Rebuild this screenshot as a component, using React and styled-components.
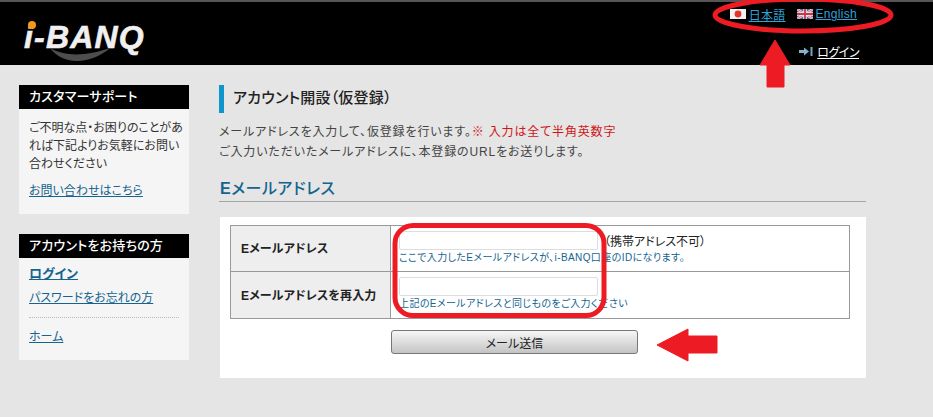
import React from "react";
import styled, { createGlobalStyle } from "styled-components";

const Global = createGlobalStyle`
  html, body {
    margin: 0;
    padding: 0;
    background: #e5e5e5;
    overflow: hidden;
  }
  * { box-sizing: border-box; }
`;

const Page = styled.div`
  position: relative;
  width: 933px;
  height: 417px;
  overflow: hidden;
  background: #e5e5e5;
  color: #333;
  font-family: "Liberation Sans", "Noto Sans CJK JP", sans-serif;
  font-size: 12px;
  font-feature-settings: "palt";
`;

const Header = styled.header`
  height: 65px;
  background: #000;
  border-top: 2px solid #555;
  display: flex;
  justify-content: space-between;
  padding: 0 76px 0 24px;
`;

const Logo = styled.div`
  position: relative;
  width: 122px;
  padding-top: 17px;
`;

const LogoText = styled.span`
  display: block;
  font-family: "Liberation Sans", sans-serif;
  font-weight: 700;
  font-style: italic;
  font-size: 32px;
  line-height: 36px;
  letter-spacing: 1.2px;
  color: #f0f0f0;
  -webkit-text-stroke: 0.6px #f0f0f0;
  white-space: nowrap;
`;

const LogoDot = styled.i`
  position: absolute;
  left: 4px;
  top: 19px;
  width: 8px;
  height: 8px;
  border-radius: 50%;
  background: #f59a17;
`;

const LogoSwoosh = styled.svg`
  position: absolute;
  left: 26px;
  top: 45px;
`;

const HeaderRight = styled.div`
  display: flex;
  flex-direction: column;
  align-items: flex-end;
  padding-top: 5px;
`;

const LangRow = styled.div`
  display: flex;
  align-items: center;
  gap: 11px;
  height: 14px;
`;

const Lang = styled.span`
  display: flex;
  align-items: center;
  gap: 3px;
`;

const LangLink = styled.a`
  color: #2fa3d8;
  text-decoration: underline;
  font-size: 12px;
  letter-spacing: 0.3px;
`;

const LoginRow = styled.div`
  display: flex;
  align-items: center;
  gap: 4px;
  margin-top: 22px;
  margin-right: -2px;
  height: 16px;
`;

const LoginLink = styled.a`
  color: #fff;
  text-decoration: underline;
  font-size: 12px;
  letter-spacing: -0.5px;
`;

const Body = styled.div`
  display: flex;
  align-items: flex-start;
  gap: 30px;
  padding: 20px 67px 0 19px;
`;

const Sidebar = styled.aside`
  width: 170px;
  display: flex;
  flex-direction: column;
  gap: 20px;
  flex-shrink: 0;
`;

const SideBox = styled.section`
  background: #f5f5f5;
  height: ${(p) => p.$height}px;
`;

const SideTitle = styled.h3`
  margin: 0;
  height: 24px;
  padding-left: 10px;
  background: #000;
  color: #fff;
  font-size: 13px;
  font-weight: 500;
  line-height: 23px;
  letter-spacing: 0.2px;
`;

const SideBody = styled.div`
  padding: ${(p) => p.$top}px 10px 0;
  line-height: 18px;
  color: #333;
  white-space: nowrap;
`;

const SideLink = styled.a`
  display: block;
  color: #14648f;
  text-decoration: underline;
  font-weight: ${(p) => (p.$bold ? 700 : 400)};
  font-size: ${(p) => (p.$bold ? 13 : 12)}px;
  margin-top: ${(p) => p.$top || 0}px;
  line-height: 18px;
`;

const Dots = styled.hr`
  border: 0;
  border-top: 1px dotted #bbb;
  margin: 10px 0 0;
`;

const Main = styled.main`
  flex: 1;
  min-width: 0;
`;

const PageTitle = styled.h1`
  margin: 0;
  height: 28px;
  border-left: 5px solid #0e95cb;
  padding-left: 9px;
  font-size: 15px;
  font-weight: 500;
  line-height: 26px;
  letter-spacing: 0.2px;
  color: #222;
`;

const Intro = styled.p`
  margin: 9px 0 0;
  font-size: 12px;
  line-height: 20px;
  letter-spacing: 0.85px;
  color: #444;
`;

const Note = styled.span`
  color: #d01515;
`;

const SectionTitle = styled.h2`
  margin: 16px 0 0;
  height: 24px;
  padding-left: 1px;
  border-bottom: 1px solid #a5a5a5;
  font-size: 16px;
  font-weight: 500;
  line-height: 22px;
  letter-spacing: 0.5px;
  color: #14648f;
`;

const SectionInitial = styled.b`
  font-weight: 700;
`;

const Panel = styled.div`
  margin: 15px 0 0 1px;
  height: 161px;
  background: #fff;
  padding: 8px 16px 0 10px;
`;

const Table = styled.div`
  border: 1px solid #999;
  display: grid;
  grid-template-columns: 160px 1fr;
  grid-auto-rows: 46px;
`;

const LabelCell = styled.div`
  background: #eee;
  border-right: 1px solid #999;
  border-bottom: ${(p) => (p.$last ? 0 : "1px solid #999")};
  display: flex;
  align-items: center;
  padding: 0 0 2px 10px;
  font-size: 12px;
  font-weight: 700;
  letter-spacing: 0.15px;
  color: #222;
`;

const FieldCell = styled.div`
  border-bottom: ${(p) => (p.$last ? 0 : "1px solid #999")};
  padding: 5px 0 0 8px;
`;

const FieldRow = styled.div`
  display: flex;
  align-items: center;
  gap: 6px;
  height: 19px;
  color: #222;
  font-size: 12px;
`;

const Input = styled.input`
  width: 199px;
  height: 19px;
  border: 1px solid #ddd;
  border-radius: 2px;
  background: #fff;
  padding: 0;
  outline: 0;
`;

const Hint = styled.div`
  font-size: 10px;
  line-height: 16px;
  letter-spacing: 0.4px;
  color: #14648f;
  white-space: nowrap;
`;

const SendButton = styled.button`
  display: block;
  width: 247px;
  height: 24px;
  margin: 11px 0 0 161px;
  border: 1px solid #777;
  border-radius: 3px;
  background: linear-gradient(#f6f6f6, #c4c4c4);
  color: #222;
  font-family: inherit;
  font-feature-settings: inherit;
  font-size: 12px;
  padding: 0;
`;

const Marks = styled.svg`
  position: absolute;
  left: 0;
  top: 0;
  pointer-events: none;
`;

const JapanFlag = () => (
  <svg width="16" height="10" viewBox="0 0 16 10">
    <rect width="16" height="10" fill="#f2f2f2" />
    <circle cx="8" cy="5" r="3.4" fill="#e0342c" />
  </svg>
);

const UkFlag = () => (
  <svg width="16" height="10" viewBox="0 0 16 10">
    <rect width="16" height="10" fill="#5a5f96" />
    <path d="M0 0L16 10M16 0L0 10" stroke="#e8dede" strokeWidth="2.4" />
    <path d="M0 0L16 10M16 0L0 10" stroke="#c85a6a" strokeWidth="0.8" />
    <path d="M8 0V10M0 5H16" stroke="#eee" strokeWidth="3.4" />
    <path d="M8 0V10M0 5H16" stroke="#c9354a" strokeWidth="1.8" />
  </svg>
);

const LoginArrow = () => (
  <svg width="14" height="9" viewBox="0 0 14 9">
    <path d="M0 3H5V0.5L10 4.5L5 8.5V6H0Z" fill="#7fb4cc" />
    <rect x="11.5" y="0" width="2" height="9" fill="#6fa8c4" />
  </svg>
);

function App() {
  return (
    <Page>
      <Global />
      <Header>
        <Logo>
          <LogoText>i-BANQ</LogoText>
          <LogoDot />
          <LogoSwoosh width="60" height="18" viewBox="0 0 60 18">
            <path d="M0 1C14 9 34 10 60 1C46 14 16 22 0 1Z" fill="#4d4d4d" />
          </LogoSwoosh>
        </Logo>
        <HeaderRight>
          <LangRow>
            <Lang>
              <JapanFlag />
              <LangLink>日本語</LangLink>
            </Lang>
            <Lang>
              <UkFlag />
              <LangLink>English</LangLink>
            </Lang>
          </LangRow>
          <LoginRow>
            <LoginArrow />
            <LoginLink>ログイン</LoginLink>
          </LoginRow>
        </HeaderRight>
      </Header>
      <Body>
        <Sidebar>
          <SideBox $height={129}>
            <SideTitle>カスタマーサポート</SideTitle>
            <SideBody $top={10}>
              ご不明な点・お困りのことがあ
              <br />
              れば下記よりお気軽にお問い
              <br />
              合わせください
              <SideLink $top={9}>お問い合わせはこちら</SideLink>
            </SideBody>
          </SideBox>
          <SideBox $height={126}>
            <SideTitle>アカウントをお持ちの方</SideTitle>
            <SideBody $top={7}>
              <SideLink $bold>ログイン</SideLink>
              <SideLink $top={6}>パスワードをお忘れの方</SideLink>
              <Dots />
              <SideLink $top={10}>ホーム</SideLink>
            </SideBody>
          </SideBox>
        </Sidebar>
        <Main>
          <PageTitle>アカウント開設（仮登録）</PageTitle>
          <Intro>
            メールアドレスを入力して、仮登録を行います。<Note>※ 入力は全て半角英数字</Note>
            <br />
            ご入力いただいたメールアドレスに、本登録のURLをお送りします。
          </Intro>
          <SectionTitle>
            <SectionInitial>E</SectionInitial>メールアドレス
          </SectionTitle>
          <Panel>
            <Table>
              <LabelCell>Eメールアドレス</LabelCell>
              <FieldCell>
                <FieldRow>
                  <Input />
                  <span>（携帯アドレス不可）</span>
                </FieldRow>
                <Hint>ここで入力したEメールアドレスが、i-BANQ口座のIDになります。</Hint>
              </FieldCell>
              <LabelCell $last>Eメールアドレスを再入力</LabelCell>
              <FieldCell $last>
                <FieldRow>
                  <Input />
                </FieldRow>
                <Hint>上記のEメールアドレスと同じものをご入力ください</Hint>
              </FieldCell>
            </Table>
            <SendButton>メール送信</SendButton>
          </Panel>
        </Main>
      </Body>
      <Marks width="933" height="417" viewBox="0 0 933 417">
        <ellipse cx="803" cy="15" rx="88" ry="16" fill="none" stroke="#ed1c24" strokeWidth="5" />
        <path d="M775 40L790 65H784V87H767V65H760Z" fill="#ed1c24" stroke="#ed1c24" strokeLinejoin="round" />
        <rect x="395" y="225.5" width="209" height="90" rx="18" fill="none" stroke="#ed1c24" strokeWidth="5" />
        <path d="M657 345L688 329V336H717V353H688V361Z" fill="#ed1c24" stroke="#ed1c24" strokeLinejoin="round" />
      </Marks>
    </Page>
  );
}

export default App;
